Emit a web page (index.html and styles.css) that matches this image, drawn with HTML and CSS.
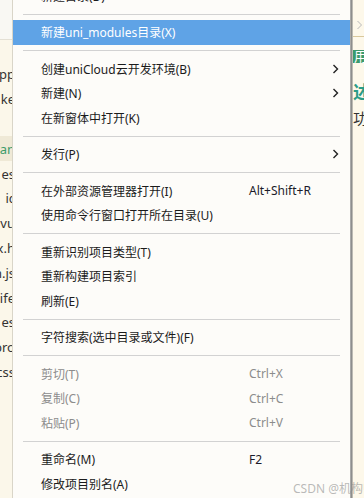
FILE: index.html
```html
<!DOCTYPE html>
<html lang="zh-CN">
<head>
    <meta charset="UTF-8">
    <title>右键菜单</title>
    <link rel="stylesheet" href="styles.css">
</head>
<body>
    <div class="screen">
        <aside class="tree">
            <div class="tree-top"></div>
            <div class="tree-row"><span>App</span></div>
            <div class="tree-row"><span>ke</span></div>
            <div class="tree-row tree-mark"><span>.</span></div>
            <div class="tree-row tree-active"><span>ian</span></div>
            <div class="tree-row"><span>es</span></div>
            <div class="tree-row"><span>ic</span></div>
            <div class="tree-row"><span>o.vu</span></div>
            <div class="tree-row"><span>ex.h</span></div>
            <div class="tree-row"><span>n.js</span></div>
            <div class="tree-row"><span>nife</span></div>
            <div class="tree-row"><span>es</span></div>
            <div class="tree-row"><span>pro</span></div>
            <div class="tree-row"><span>scss</span></div>
        </aside>

        <nav class="menu">
            <ul class="menu-list">
                <li class="item"><span class="label">新建目录(D)</span></li>
                <li class="sep"></li>
                <li class="item active"><span class="label">新建uni_modules目录(X)</span></li>
                <li class="sep"></li>
                <li class="item"><span class="label">创建uniCloud云开发环境(B)</span><span class="arrow"><svg width="7" height="10" viewBox="0 0 7 10"><path d="M1.5 1 L5.5 5 L1.5 9" /></svg></span></li>
                <li class="item"><span class="label">新建(N)</span><span class="arrow"><svg width="7" height="10" viewBox="0 0 7 10"><path d="M1.5 1 L5.5 5 L1.5 9" /></svg></span></li>
                <li class="item"><span class="label">在新窗体中打开(K)</span></li>
                <li class="sep"></li>
                <li class="item"><span class="label">发行(P)</span><span class="arrow"><svg width="7" height="10" viewBox="0 0 7 10"><path d="M1.5 1 L5.5 5 L1.5 9" /></svg></span></li>
                <li class="sep"></li>
                <li class="item"><span class="label">在外部资源管理器打开(I)</span><span class="key">Alt+Shift+R</span></li>
                <li class="item"><span class="label">使用命令行窗口打开所在目录(U)</span></li>
                <li class="sep"></li>
                <li class="item"><span class="label">重新识别项目类型(T)</span></li>
                <li class="item"><span class="label">重新构建项目索引</span></li>
                <li class="item"><span class="label">刷新(E)</span></li>
                <li class="sep"></li>
                <li class="item"><span class="label">字符搜索(选中目录或文件)(F)</span></li>
                <li class="sep"></li>
                <li class="item disabled"><span class="label">剪切(T)</span><span class="key">Ctrl+X</span></li>
                <li class="item disabled"><span class="label">复制(C)</span><span class="key">Ctrl+C</span></li>
                <li class="item disabled"><span class="label">粘贴(P)</span><span class="key">Ctrl+V</span></li>
                <li class="sep"></li>
                <li class="item"><span class="label">重命名(M)</span><span class="key">F2</span></li>
                <li class="item"><span class="label">修改项目别名(A)</span></li>
            </ul>
        </nav>
        <div class="menu-edge"></div>

        <aside class="editor">
            <div class="crumb">
                <svg width="7" height="10" viewBox="0 0 7 10"><path d="M1.5 1 L5.5 5 L1.5 9" /></svg>
            </div>
            <div class="tab-line"></div>
            <div class="tag">用</div>
            <div class="title">述</div>
            <div class="text">功</div>
        </aside>

        <div class="watermark">CSDN @机构师</div>
    </div>
</body>
</html>
```

FILE: styles.css
```css
body {
    margin: 0;
    font-family: "Noto Sans", "Noto Sans CJK SC", sans-serif;
    font-size: 12px;
    color: #1b1b1b;
}

.screen {
    position: relative;
    display: flex;
    width: 364px;
    height: 498px;
    overflow: hidden;
    background-color: #fdf8ea;
}

/* file tree behind the menu */
.tree {
    flex: 0 0 12px;
    border-right: 1px solid #d9d5c8;
    background-color: #fbf7ea;
    overflow: hidden;
}

.tree-top {
    height: 39px;
    border-bottom: 1px solid #e4e0d4;
    background-color: #f9f8f3;
    margin-bottom: 22px;
}

.tree-row {
    display: flex;
    justify-content: flex-end;
    align-items: center;
    height: 24.8px;
    font-size: 13px;
    color: #333;
    white-space: nowrap;
    overflow: hidden;
}

.tree-row span {
    margin-right: -3px;
}

.tree-mark {
    color: #45a36f;
}

.tree-active {
    background-color: #efe9d6;
    color: #3d9b6b;
}

/* context menu */
.menu {
    flex: 0 0 337px;
    background-color: #fdfcf9;
    overflow: hidden;
}

.menu-list {
    list-style: none;
    margin: -16.5px 0 0 0;
    padding: 0;
}

.item {
    display: flex;
    align-items: center;
    height: 24.5px;
    padding: 0 11px 0 28px;
    white-space: nowrap;
}

.item .label {
    flex: 0 0 208px;
}

.item .key {
    color: #1b1b2a;
}

.item .arrow {
    margin-left: auto;
    display: flex;
}

.arrow path,
.crumb path {
    fill: none;
    stroke: #222;
    stroke-width: 1.4;
}

.item.active {
    background-color: #5fa3e6;
    color: #fff;
}

.item.disabled,
.item.disabled .key {
    color: #8c8c8c;
}

.sep {
    height: 12px;
    display: flex;
    align-items: center;
    margin: 0 10px;
}

.sep::after {
    content: "";
    flex: 1;
    height: 1px;
    background-color: #d2d2d2;
}

.menu-edge {
    flex: 0 0 3px;
    background: linear-gradient(to right, #b8b8b6, #8e8e8c, #d3d0c6);
}

/* editor peeking at the right */
.editor {
    flex: 1;
    overflow: hidden;
    white-space: nowrap;
}

.crumb {
    height: 20px;
    padding: 19px 0 0 3px;
    box-sizing: border-box;
    display: flex;
    align-items: flex-start;
}

.crumb svg {
    margin-top: 1px;
}

.crumb path {
    stroke: #b9b9b9;
    stroke-width: 1;
}

.tab-line {
    height: 1px;
    margin-top: 16px;
    background-color: #d9c89c;
}

.tag {
    margin-top: 13px;
    height: 13px;
    line-height: 13px;
    padding-left: 1px;
    background-color: #3a9a6c;
    color: #fff;
    font-size: 13px;
}

.title {
    margin-top: 19px;
    font-size: 18px;
    line-height: 20px;
    font-weight: bold;
    color: #2a9c86;
}

.text {
    margin-top: 8px;
    font-size: 15px;
    line-height: 16px;
    color: #333;
}

.watermark {
    position: absolute;
    left: 293px;
    top: 479px;
    font-size: 12px;
    color: rgba(140, 140, 140, 0.6);
    white-space: nowrap;
}
```
